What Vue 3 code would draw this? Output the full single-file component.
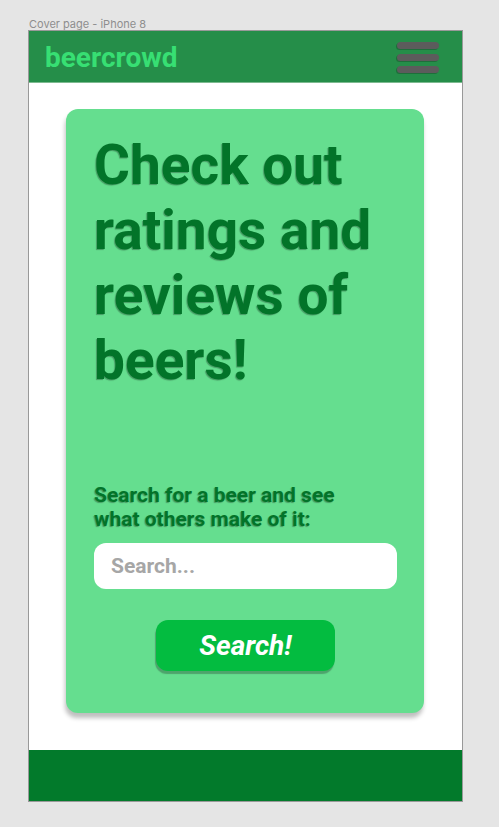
<script setup>
import { ref } from 'vue'

const query = ref('')
</script>

<template>
  <div class="canvas">
    <div class="frame-name">Cover page - iPhone 8</div>
    <div class="frame">
      <header class="topbar">
        <a class="brand" href="#">beercrowd</a>
        <button class="menu" type="button" aria-label="Menu">
          <span class="bar"></span>
          <span class="bar"></span>
          <span class="bar"></span>
        </button>
      </header>
      <main class="content">
        <form class="card" @submit.prevent>
          <h1 class="title">Check out ratings and reviews of beers!</h1>
          <label class="prompt" for="beer">Search for a beer and see what others make of it:</label>
          <input id="beer" v-model="query" class="field" type="text" placeholder="Search..." />
          <button class="submit" type="submit">Search!</button>
        </form>
      </main>
      <footer class="footer"></footer>
    </div>
  </div>
</template>

<style>
body {
  background: #e5e5e5;
}
</style>

<style scoped>
.canvas,
.canvas * {
  box-sizing: border-box;
}

.canvas {
  padding: 18px 36px 25px 28px;
  font-family: Roboto, sans-serif;
}

.frame-name {
  padding-left: 1px;
  font-family: Inter, sans-serif;
  font-size: 11px;
  line-height: 12px;
  color: #8e8e8e;
}

.frame {
  border: 1px solid #999999;
  background: #ffffff;
}

.topbar {
  display: flex;
  align-items: center;
  justify-content: space-between;
  height: 52px;
  padding: 2px 23px 0 16px;
  border-bottom: 1px solid #7dba90;
  background: #258e49;
}

.brand {
  font-size: 28px;
  font-weight: 700;
  line-height: 32px;
  color: #37df73;
  text-decoration: none;
}

.menu {
  display: flex;
  flex-direction: column;
  gap: 5px;
  padding: 0;
  border: 0;
  background: none;
}

.bar {
  width: 42px;
  height: 7px;
  border-radius: 4px;
  background: #5c5c5c;
  box-shadow: -1px 1px 0 #1e6f3a;
}

.content {
  padding: 26px 38px 37px 37px;
}

.card {
  display: flex;
  flex-direction: column;
  padding: 24px 27px 42px 28px;
  border-radius: 12px;
  background: #65de8f;
  box-shadow: -1px 5px 4px rgba(0, 0, 0, 0.25);
}

.title {
  margin: 0 0 90px;
  font-size: 55px;
  font-weight: 700;
  line-height: 65px;
  color: #027429;
  text-shadow: -1px 1px 1px rgba(0, 0, 0, 0.3);
}

.prompt {
  max-width: 260px;
  margin-bottom: 12px;
  font-size: 21px;
  font-weight: 700;
  line-height: 24px;
  color: #027429;
  text-shadow: -1px 1px 1px rgba(0, 0, 0, 0.3);
}

.field {
  width: 100%;
  height: 46px;
  padding: 0 17px;
  border: 0;
  border-radius: 12px;
  background: #ffffff;
  font-family: inherit;
  font-size: 21px;
  font-weight: 700;
  color: #027429;
}

.field::placeholder {
  color: #a6a6a6;
  opacity: 1;
}

.submit {
  align-self: center;
  width: 179px;
  height: 51px;
  margin-top: 31px;
  padding: 0;
  border: 0;
  border-radius: 12px;
  background: #03bc40;
  box-shadow: -1px 3px 1px #4ea36c;
  font-family: inherit;
  font-size: 28px;
  font-style: italic;
  font-weight: 700;
  line-height: 32px;
  color: #ffffff;
}

.footer {
  height: 51px;
  background: #027a2b;
}
</style>
